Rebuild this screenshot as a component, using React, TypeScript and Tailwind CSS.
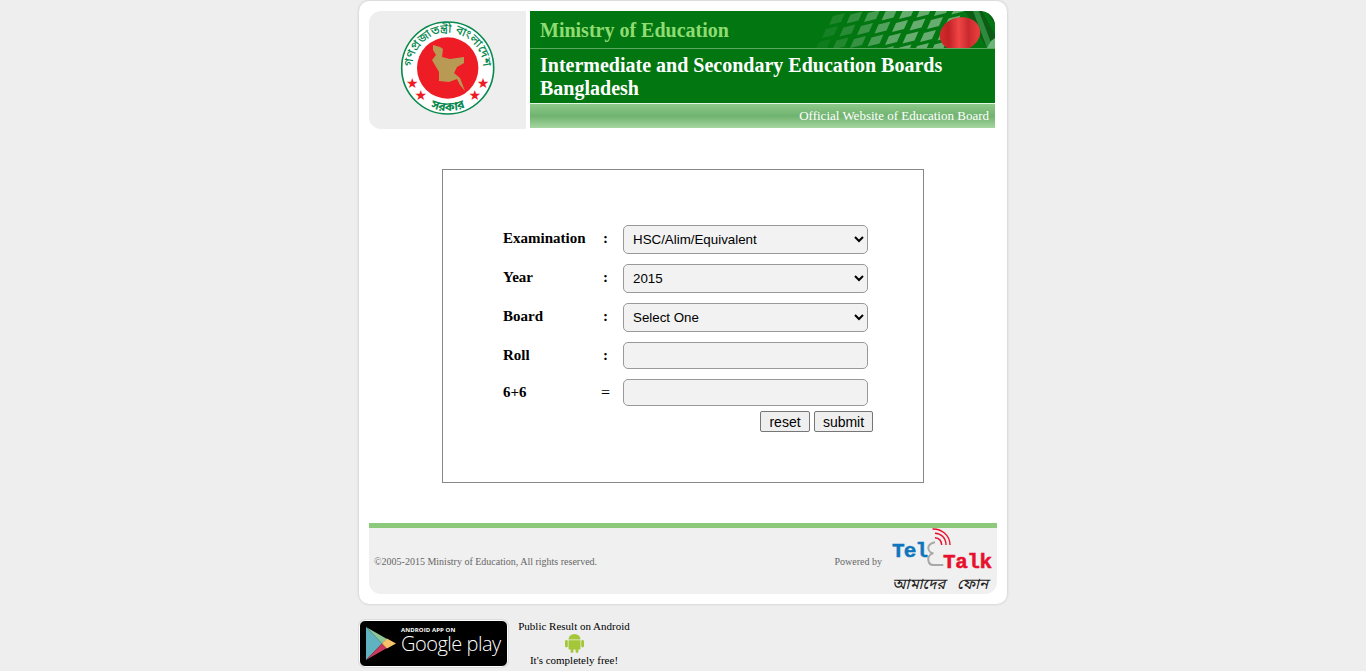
import React from 'react';

const bengali = "'Noto Sans Bengali','Noto Sans','DejaVu Sans',sans-serif";

const Seal = () => (
  <svg width="157" height="118" viewBox="0 0 157 118">
    <defs>
      <path id="sealTop" d="M 43.8 63 A 35.4 35.4 0 1 1 113.6 63" fill="none" />
      <path id="sealBottom" d="M 54.7 92.6 A 43 43 0 0 0 102.7 92.6" fill="none" />
    </defs>
    <circle cx="78.7" cy="57" r="46" fill="#fff" stroke="#07894f" strokeWidth="1.6" />
    <circle cx="78.7" cy="57" r="30.7" fill="#ee1c25" />
    <path
      d="M64 34 L71 36 L74 38 L73 46 L81 48 L95 46 L95 52 L88 56 L85 62 L91 67 L96 80 L91 74 L88 68 L80 71 L70 70 L70 61 L63 49 L67 44 L64 39 Z"
      fill="#b99a55"
    />
    <g fill="#ee1c25" fontSize="14" style={{ fontFamily: "'DejaVu Sans',sans-serif" }} textAnchor="middle">
      <text x="43.3" y="77">★</text>
      <text x="51.7" y="89">★</text>
      <text x="105.7" y="89">★</text>
      <text x="114" y="77">★</text>
    </g>
    <text fill="#07894f" fontSize="12" fontWeight="500" style={{ fontFamily: bengali }}>
      <textPath href="#sealTop" startOffset="50%" textAnchor="middle">গণপ্রজাতন্ত্রী বাংলাদেশ</textPath>
    </text>
    <text fill="#07894f" fontSize="12" fontWeight="700" style={{ fontFamily: bengali }}>
      <textPath href="#sealBottom" startOffset="50%" textAnchor="middle">সরকার</textPath>
    </text>
  </svg>
);

const HeaderArt = () => {
  const tiles: { x: number; y: number; o: number }[] = [];
  for (let r = 0; r < 4; r++) {
    for (let c = 0; c < 8; c++) {
      const x = 34 + c * 17.5 - r * 7;
      const y = 5 + r * 13 - c * 1.5;
      const o = Math.min(0.4, Math.max(0.02, (x - 10) / 220));
      tiles.push({ x, y, o });
    }
  }
  return (
    <svg className="absolute right-0 top-0" width="200" height="37" viewBox="0 0 200 37">
      <defs>
        <linearGradient id="flagRed" x1="0" x2="1" y1="0" y2="0.2">
          <stop offset="0" stopColor="#d8322f" />
          <stop offset="0.3" stopColor="#c22226" />
          <stop offset="0.55" stopColor="#f04545" />
          <stop offset="0.78" stopColor="#c92a2e" />
          <stop offset="1" stopColor="#e63b3b" />
        </linearGradient>
        <filter id="soft">
          <feGaussianBlur stdDeviation="0.6" />
        </filter>
      </defs>
      <g filter="url(#soft)">
        {tiles.map((t, i) => (
          <path key={i} d={`M${t.x + 4} ${t.y} l12 -3 l-4 9 l-12 3 Z`} fill="#fff" opacity={t.o} />
        ))}
        <path d="M170 0 L187 0 L200 24 L200 37 L192 37 Z" fill="#0a5c14" />
        <path d="M178 0 L184 0 L198 37 L192 37 Z" fill="#2f8a3c" />
        <path d="M191 0 L200 0 L200 14 Z" fill="#0a5c14" />
        <path d="M196 30 L200 27 L200 37 L192 37 Z" fill="#6db67a" />
        <ellipse cx="165" cy="23" rx="20.5" ry="16.5" transform="rotate(-15 165 23)" fill="url(#flagRed)" />
      </g>
    </svg>
  );
};

const TeleTalk = () => (
  <svg width="112" height="66" viewBox="0 0 112 66">
    <text x="7" y="29" fill="#0f75bc" stroke="#0f75bc" strokeWidth="0.5" fontSize="21" fontWeight="700" style={{ fontFamily: "'Liberation Mono',monospace" }} textLength="36">Tel</text>
    <text x="58" y="39.5" fill="#e8112d" stroke="#e8112d" strokeWidth="0.5" fontSize="21" fontWeight="700" style={{ fontFamily: "'Liberation Mono',monospace" }} textLength="49">Talk</text>
    <path d="M50 14.3 C45 15 43 18 43.3 20.3 C43.5 23 46 25 48.3 25.3 C45 26 43 29 43.3 32 C43.7 35 45 37 48 37 L58.3 37" fill="none" stroke="#a8a8a8" strokeWidth="2" />
    <g fill="none" stroke="#e8112d" strokeWidth="1.4">
      <path d="M50 9.7 C54 10 56.5 13 56.7 17" />
      <path d="M50 5.3 C56 5.5 61 10 61 17" />
      <path d="M47.5 1 C56 0.5 65 7 65 17" />
    </g>
    <text x="7" y="61" fill="#222" fontSize="15" fontStyle="italic" wordSpacing="8" style={{ fontFamily: bengali }}>আমাদের ফোন</text>
  </svg>
);

const AndroidIcon = () => (
  <svg width="19" height="20" viewBox="0 0 19 20" fill="#a4c639">
    <path d="M3.5 6.5 A6 5.6 0 0 1 15.5 6.5 Z" />
    <path d="M3.5 7.2 H15.5 V15.5 A1 1 0 0 1 14.5 16.5 H4.5 A1 1 0 0 1 3.5 15.5 Z" />
    <rect x="0" y="7" width="2.8" height="7.5" rx="1.4" />
    <rect x="16.2" y="7" width="2.8" height="7.5" rx="1.4" />
    <rect x="5.6" y="15" width="2.8" height="5" rx="1.4" />
    <rect x="10.6" y="15" width="2.8" height="5" rx="1.4" />
  </svg>
);

const PlayBadge = () => (
  <div className="flex h-[47px] w-[149px] items-center rounded-[6px] border border-white bg-black pl-[6px] shadow-[0_0_0_1px_#ddd]">
    <svg width="30" height="33" viewBox="0 0 30 33" className="mr-[5px] shrink-0">
      <path d="M0 0 L16 16.5 L0 33 Z" fill="#5fb3c0" />
      <path d="M0 0 L21 12 L16 16.5 Z" fill="#8cc69a" />
      <path d="M0 33 L21 21 L16 16.5 Z" fill="#c9395c" />
      <path d="M21 11.5 L30 16.5 L21 21.5 L16 16.5 Z" fill="#f6c36a" />
    </svg>
    <div className="mb-[7px] flex flex-col text-white">
      <span className="font-['Open_Sans',sans-serif] text-[6px] font-bold leading-[8px] tracking-[0.1px]">ANDROID APP ON</span>
      <span className="whitespace-nowrap font-['Open_Sans',sans-serif] text-[20px] font-light leading-[20px] tracking-[-0.5px]">Google play</span>
    </div>
  </div>
);

const labelClass = "w-[96px] text-[15px] font-bold leading-[17px]";
const sepClass = "w-[13px] text-center text-[15px] font-bold leading-[17px]";
const selectClass = "ml-[11px] h-[29px] w-[245px] rounded-[5px] border border-[#999] bg-[#f2f2f2] pl-[5px] font-['Liberation_Sans',sans-serif] text-[13.33px] text-black";
const inputClass = "ml-[11px] h-[27px] w-[245px] rounded-[5px] border border-[#999] bg-[#f2f2f2]";

const App = () => {
  return (
    <div className="min-h-screen bg-[#eeeeee] pt-px font-['Liberation_Serif',serif] text-black">
      <div className="ml-[359px] w-[648px]">
        <div className="rounded-[10px] bg-white px-[10px] pb-[10px] pt-[10px] shadow-[0_0_3px_rgba(0,0,0,0.2)]">
          {/* header */}
          <div className="flex items-start">
            <div className="flex h-[118px] w-[157px] rounded-l-[12px] bg-[#eeeeee]">
              <Seal />
            </div>
            <div className="ml-[4px] w-[465px] overflow-hidden rounded-tr-[15px]">
              <div className="relative h-[38px] border-b border-[#5ca85f] bg-[#027611] pl-[10px] pt-[7px]">
                <HeaderArt />
                <h1 className="relative text-[20px] font-bold leading-[24px] text-[#8fdc72]">Ministry of Education</h1>
              </div>
              <div className="h-[54px] bg-[#027611] pl-[10px] pt-[5px]">
                <h2 className="text-[20px] font-bold leading-[23px] text-white">
                  Intermediate and Secondary Education Boards
                  <br />
                  Bangladesh
                </h2>
              </div>
              <div className="h-[25px] border-t border-[#e4f3e2] bg-gradient-to-b from-[#8ec98a] via-[#6fb36f] to-[#a5d6a0] pr-[6px] text-right text-[13px] leading-[23px] text-white">
                Official Website of Education Board
              </div>
            </div>
          </div>

          {/* result form */}
          <div className="ml-[73px] mt-[40px] h-[314px] w-[482px] border border-[#888] pl-[60px] pt-[55px]">
            <div className="flex flex-col gap-[10px]">
              <div className="flex items-center">
                <span className={`${labelClass} pb-[2px]`}>Examination</span>
                <span className={`${sepClass} pb-[2px]`}>:</span>
                <select className={selectClass} defaultValue="hsc">
                  <option value="hsc">HSC/Alim/Equivalent</option>
                </select>
              </div>
              <div className="flex items-center">
                <span className={`${labelClass} pb-[2px]`}>Year</span>
                <span className={`${sepClass} pb-[2px]`}>:</span>
                <select className={selectClass} defaultValue="2015">
                  <option value="2015">2015</option>
                </select>
              </div>
              <div className="flex items-center">
                <span className={`${labelClass} pb-[2px]`}>Board</span>
                <span className={`${sepClass} pb-[2px]`}>:</span>
                <select className={selectClass} defaultValue="">
                  <option value="">Select One</option>
                </select>
              </div>
              <div className="flex items-center">
                <span className={labelClass}>Roll</span>
                <span className={sepClass}>:</span>
                <input className={inputClass} type="text" />
              </div>
              <div className="flex items-center">
                <span className={labelClass}>6+6</span>
                <span className="w-[13px] text-center text-[16px] leading-[17px]">=</span>
                <input className={inputClass} type="text" />
              </div>
            </div>
            <div className="mt-[5px] flex w-[370px] justify-end gap-[4px] font-['Liberation_Sans',sans-serif] text-[14px]">
              <button className="h-[21px] w-[50px] rounded-[2px] border border-[#767676] bg-[#efefef] leading-none" type="reset">reset</button>
              <button className="h-[21px] w-[59px] rounded-[2px] border border-[#767676] bg-[#efefef] leading-none" type="submit">submit</button>
            </div>
          </div>

          {/* footer */}
          <div className="mt-[40px] flex h-[71px] items-stretch rounded-b-[12px] border-t-[5px] border-[#8cc97a] bg-[#f0f0f0]">
            <p className="mt-[28px] pl-[5px] text-[10px] leading-[12px] text-[#666]">©2005-2015 Ministry of Education, All rights reserved.</p>
            <p className="ml-auto mt-[28px] text-[10px] leading-[12px] text-[#666]">Powered by</p>
            <div className="ml-[3px] w-[112px]">
              <TeleTalk />
            </div>
          </div>
        </div>

        {/* android app */}
        <div className="mt-[16px] flex items-start">
          <PlayBadge />
          <div className="ml-[10px] w-[112px] text-center text-[11px] leading-[13px]">
            <p className="whitespace-nowrap">Public Result on Android</p>
            <div className="flex h-[21px] justify-center">
              <AndroidIcon />
            </div>
            <p className="whitespace-nowrap">It's completely free!</p>
          </div>
        </div>
      </div>
    </div>
  );
};

export default App;
